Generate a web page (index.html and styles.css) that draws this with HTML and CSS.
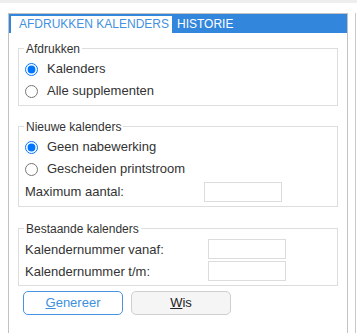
FILE: index.html
```html
<!DOCTYPE html>
<html lang="nl">
<head>
<meta charset="utf-8">
<title>Afdrukken kalenders</title>
<link rel="stylesheet" href="styles.css">
</head>
<body>
<div class="topbar"></div>
<div class="main">
  <div class="panel">
    <div class="tabbar">
      <div class="tab tab-active">AFDRUKKEN KALENDERS</div>
      <div class="tab">HISTORIE</div>
    </div>
    <div class="panel-body">
      <fieldset class="group group-print">
        <legend>Afdrukken</legend>
        <label class="opt"><input class="radio" type="radio" name="print" checked><span>Kalenders</span></label>
        <label class="opt"><input class="radio" type="radio" name="print"><span>Alle supplementen</span></label>
      </fieldset>
      <fieldset class="group group-new">
        <legend>Nieuwe kalenders</legend>
        <label class="opt"><input class="radio" type="radio" name="post" checked><span>Geen nabewerking</span></label>
        <label class="opt"><input class="radio" type="radio" name="post"><span>Gescheiden printstroom</span></label>
        <div class="field field-tall">
          <span class="field-label label-new">Maximum aantal:</span>
          <input class="text-input" type="text">
        </div>
      </fieldset>
      <fieldset class="group group-existing">
        <legend>Bestaande kalenders</legend>
        <div class="field">
          <span class="field-label label-existing">Kalendernummer vanaf:</span>
          <input class="text-input" type="text">
        </div>
        <div class="field">
          <span class="field-label label-existing">Kalendernummer t/m:</span>
          <input class="text-input" type="text">
        </div>
      </fieldset>
      <div class="actions">
        <button class="btn btn-primary" type="button"><u>G</u>enereer</button>
        <button class="btn" type="button"><u>W</u>is</button>
      </div>
    </div>
  </div>
  <div class="edge"></div>
</div>
</body>
</html>
```
FILE: styles.css
```css
html, body {
  margin: 0;
  padding: 0;
  background: #ffffff;
}

body {
  font-family: "Liberation Sans", Arial, sans-serif;
  font-size: 13px;
  color: #333333;
}

.topbar {
  height: 3px;
  background: #eeeeee;
}

.main {
  display: flex;
  padding-top: 10px;
  height: 320px;
}

.panel {
  box-sizing: border-box;
  width: 340px;
  margin-left: 8px;
  border: 1px solid #c2c2c2;
  border-bottom: none;
}

.edge {
  width: 1px;
  margin-left: 7px;
  background: #c8c8c8;
}

.tabbar {
  display: flex;
  align-items: flex-end;
  height: 19px;
  padding-left: 2px;
  background: #3286dc;
}

.tab {
  font-size: 12px;
  line-height: 16px;
  height: 17px;
  padding-bottom: 1px;
  box-sizing: border-box;
  padding-left: 5px;
  color: #ffffff;
  white-space: nowrap;
}

.tab-active {
  width: 161px;
  padding-left: 8px;
  background: #ffffff;
  color: #4391e0;
}

.group {
  margin: 0 9px;
  border: 1px solid #dddddd;
  padding: 2px 8px 3px 5px;
  min-width: 0;
}

.group legend {
  padding: 2px 2px 0;
  font-size: 12px;
  line-height: 14px;
  color: #333333;
}

.group-print {
  margin-top: 7px;
}

.group-new {
  margin-top: 12px;
}

.group-existing {
  margin-top: 13px;
  padding-top: 3px;
  padding-bottom: 2px;
}

.opt {
  display: flex;
  align-items: center;
  height: 22px;
  line-height: 22px;
}

.radio {
  width: 13px;
  height: 13px;
  margin: 0 9px 0 1px;
}

.field {
  display: flex;
  align-items: flex-start;
  height: 22px;
  line-height: 22px;
}

.field-tall {
  height: 23px;
  align-items: center;
}

.field-label {
  flex: none;
  padding-left: 1px;
  box-sizing: border-box;
}

.label-new {
  width: 180px;
}

.label-existing {
  width: 184px;
}

.text-input {
  box-sizing: border-box;
  flex: none;
  width: 78px;
  height: 20px;
  margin: 0;
  padding: 0 3px;
  border: 1px solid #dcdcdc;
  background: #ffffff;
  font: inherit;
}

.actions {
  display: flex;
  gap: 8px;
  margin-top: 5px;
  padding-left: 14px;
}

.btn {
  box-sizing: border-box;
  width: 100px;
  height: 24px;
  margin: 0;
  padding: 0;
  border: 1px solid #cfcfcf;
  border-radius: 5px;
  background: #f5f5f5;
  font: inherit;
  font-size: 13px;
  line-height: 22px;
  color: #222222;
}

.btn-primary {
  border-color: #4a92e2;
  background: #ffffff;
  color: #3d8fe0;
}
```
